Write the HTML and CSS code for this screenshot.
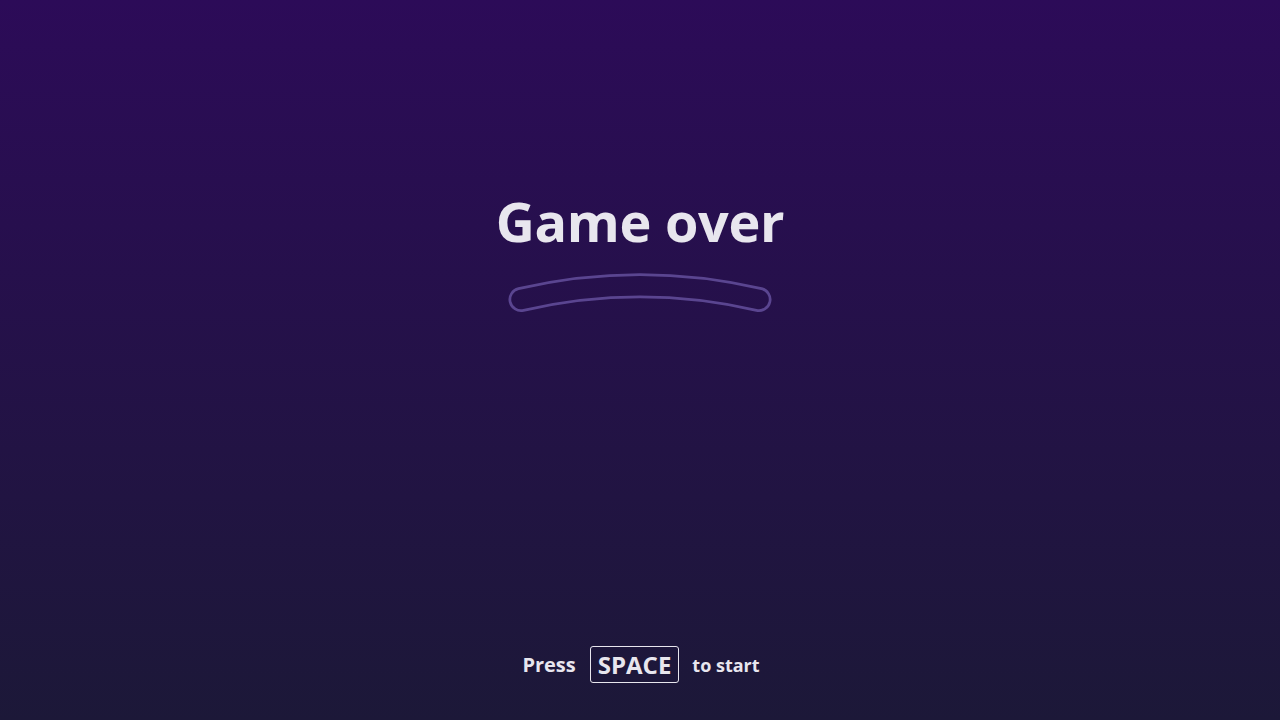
FILE: index.html
```html
<!DOCTYPE html>
<html lang="en">
<head>
<meta charset="utf-8">
<title>Game over</title>
<link rel="stylesheet" href="styles.css">
</head>
<body>
<main class="screen">
  <section class="center">
    <h1 class="title">Game over</h1>
    <svg class="frown" width="270" height="44" viewBox="505 270 270 44" aria-hidden="true">
      <defs>
        <mask id="ring" maskUnits="userSpaceOnUse" x="505" y="270" width="270" height="44">
          <path d="M521 299.5 Q640 272 759 299.5" fill="none" stroke="#fff" stroke-width="25" stroke-linecap="round"/>
          <path d="M521 299.5 Q640 272 759 299.5" fill="none" stroke="#000" stroke-width="19.5" stroke-linecap="round"/>
        </mask>
      </defs>
      <rect x="505" y="270" width="270" height="44" fill="#5a4590" mask="url(#ring)"/>
    </svg>
  </section>
  <footer class="prompt">
    <span class="word word-press">Press</span>
    <kbd class="key">SPACE</kbd>
    <span class="word">to start</span>
  </footer>
</main>
</body>
</html>
```
FILE: styles.css
```css
html, body {
  margin: 0;
  height: 100%;
}
body {
  background: linear-gradient(180deg, #2c0b58 0%, #1c1838 100%);
  font-family: "Open Sans", "Noto Sans", sans-serif;
  color: #e8e6ee;
}
.screen {
  height: 720px;
  display: flex;
  flex-direction: column;
  align-items: center;
}
.center {
  margin-top: 183px;
  display: flex;
  flex-direction: column;
  align-items: center;
}
.title {
  margin: 0;
  font-size: 54px;
  font-weight: 700;
  line-height: 76px;
  letter-spacing: -0.3px;
}
.frown {
  display: block;
  margin-top: 11px;
}
.prompt {
  margin-top: auto;
  margin-bottom: 37px;
  display: flex;
  align-items: center;
  gap: 13px;
  padding-left: 2px;
}
.word {
  font-size: 18px;
  font-weight: 700;
  line-height: 24px;
}
.word-press {
  font-size: 20px;
  margin-top: 0;
  margin-right: 1px;
}
.key {
  font-family: inherit;
  font-size: 24px;
  font-weight: 700;
  line-height: 35px;
  padding: 0 7px;
  border: 1px solid #e8e6ee;
  border-radius: 3px;
}
```
